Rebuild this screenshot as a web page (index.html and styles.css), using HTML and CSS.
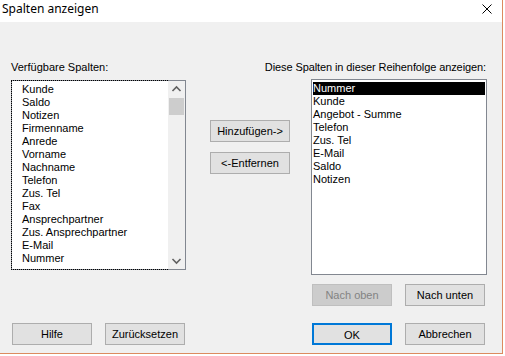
FILE: index.html
```html
<!DOCTYPE html>
<html lang="de">
<head>
<meta charset="utf-8">
<title>Spalten anzeigen</title>
<link rel="stylesheet" href="styles.css">
</head>
<body>
<div class="dialog">
  <div class="titlebar">
    <span class="title">Spalten anzeigen</span>
    <svg class="close" width="10" height="10" viewBox="0 0 10 10"><path d="M0.5 0.5 L9.5 9.5 M9.5 0.5 L0.5 9.5" stroke="#000" stroke-width="1" fill="none"/></svg>
  </div>
  <div class="content">
    <div class="columns">
      <div class="col-left">
        <div class="label">Verfügbare Spalten:</div>
        <div class="listbox listbox-left">
          <div class="items items-left">
            <div class="row">Kunde</div>
            <div class="row">Saldo</div>
            <div class="row">Notizen</div>
            <div class="row">Firmenname</div>
            <div class="row">Anrede</div>
            <div class="row">Vorname</div>
            <div class="row">Nachname</div>
            <div class="row">Telefon</div>
            <div class="row">Zus. Tel</div>
            <div class="row">Fax</div>
            <div class="row">Ansprechpartner</div>
            <div class="row">Zus. Ansprechpartner</div>
            <div class="row">E-Mail</div>
            <div class="row">Nummer</div>
          </div>
          <div class="scrollbar">
            <div class="sb-btn"><svg width="17" height="17" viewBox="0 0 17 17"><polyline points="4.5,10 8.5,6 12.5,10" fill="none" stroke="#606060" stroke-width="1.6"/></svg></div>
            <div class="sb-track"><div class="sb-thumb"></div></div>
            <div class="sb-btn"><svg width="17" height="17" viewBox="0 0 17 17"><polyline points="4.5,7 8.5,11 12.5,7" fill="none" stroke="#606060" stroke-width="1.6"/></svg></div>
          </div>
        </div>
      </div>
      <div class="col-mid">
        <button class="btn">Hinzufügen-&gt;</button>
        <button class="btn">&lt;-Entfernen</button>
      </div>
      <div class="col-right">
        <div class="label label-right"><span>Diese Spalten in dieser Reihenfolge anzeigen:</span></div>
        <div class="listbox listbox-right">
          <div class="items items-right">
            <div class="row selected">Nummer</div>
            <div class="row">Kunde</div>
            <div class="row">Angebot - Summe</div>
            <div class="row">Telefon</div>
            <div class="row">Zus. Tel</div>
            <div class="row">E-Mail</div>
            <div class="row">Saldo</div>
            <div class="row">Notizen</div>
          </div>
        </div>
        <div class="order-buttons">
          <button class="btn disabled">Nach oben</button>
          <button class="btn">Nach unten</button>
        </div>
      </div>
    </div>
    <div class="footer">
      <div class="group">
        <button class="btn">Hilfe</button>
        <button class="btn">Zurücksetzen</button>
      </div>
      <div class="group">
        <button class="btn default">OK</button>
        <button class="btn">Abbrechen</button>
      </div>
    </div>
  </div>
</div>
</body>
</html>
```
FILE: styles.css
```css
html, body {
  margin: 0;
  padding: 0;
  background: #ffffff;
}
body {
  width: 505px;
  height: 356px;
  overflow: hidden;
  font-family: "Liberation Sans", Arial, sans-serif;
  font-size: 11px;
  color: #000;
}
.dialog {
  box-sizing: border-box;
  width: 503px;
  height: 354px;
  background: #f0f0f0;
  border-right: 1px solid #dc8a5f;
  border-bottom: 1px solid #dc8a5f;
}
.titlebar {
  height: 22px;
  background: #ffffff;
  display: flex;
  justify-content: space-between;
  align-items: flex-start;
}
.title {
  font-family: "Noto Sans", "Open Sans", sans-serif;
  font-size: 12px;
  line-height: 17px;
  padding-left: 2px;
}
.close {
  margin-top: 4px;
  margin-right: 10px;
}
.content {
  padding: 39px 0 0 11px;
}
.columns {
  display: flex;
}
.label {
  height: 13px;
  line-height: 13px;
  white-space: nowrap;
}
.label-right {
  display: flex;
  justify-content: flex-end;
  margin-right: 1px;
}
.label-right span {
  flex: none;
  letter-spacing: -0.1px;
}
.col-left {
  width: 175px;
}
.col-mid {
  width: 125px;
  box-sizing: border-box;
  padding: 59px 0 0 24px;
  display: flex;
  flex-direction: column;
  gap: 10px;
}
.col-right {
  width: 176px;
}
.listbox {
  box-sizing: border-box;
  border: 1px solid #828790;
  background: #ffffff;
}
.listbox-left {
  margin-top: 6px;
  height: 190px;
  display: flex;
}
.listbox-right {
  margin-top: 5px;
  height: 196px;
}
.items {
  line-height: 13px;
  white-space: nowrap;
}
.items-left {
  flex: 1;
  margin: -1px 0 -1px -1px;
  border: 1px dotted #000;
  border-right: 0;
  padding: 2px 0 0 10px;
  overflow: hidden;
}
.items-right {
  padding: 2px 1px 0 1px;
}
.row {
  height: 13px;
}
.row.selected {
  background: #000;
  color: #fff;
}
.scrollbar {
  width: 17px;
  background: #f0f0f0;
  display: flex;
  flex-direction: column;
}
.sb-btn {
  height: 17px;
}
.sb-btn svg {
  display: block;
}
.sb-track {
  flex: 1;
}
.sb-thumb {
  height: 17px;
  margin: 0 1px;
  background: #cdcdcd;
}
.btn {
  box-sizing: border-box;
  width: 80px;
  height: 22px;
  margin: 0;
  padding: 0;
  border: 1px solid #adadad;
  background: #e1e1e1;
  font-family: "Liberation Sans", Arial, sans-serif;
  font-size: 11px;
  color: #000;
  line-height: 20px;
}
.btn.disabled {
  background: #cccccc;
  border-color: #bfbfbf;
  color: #838383;
}
.btn.default {
  border: 2px solid #0078d7;
}
.order-buttons {
  margin-top: 9px;
  padding-left: 1px;
  display: flex;
  gap: 13px;
}
.footer {
  margin-top: 17px;
  padding-left: 1px;
  display: flex;
  gap: 127px;
}
.group {
  display: flex;
  gap: 13px;
}
```
